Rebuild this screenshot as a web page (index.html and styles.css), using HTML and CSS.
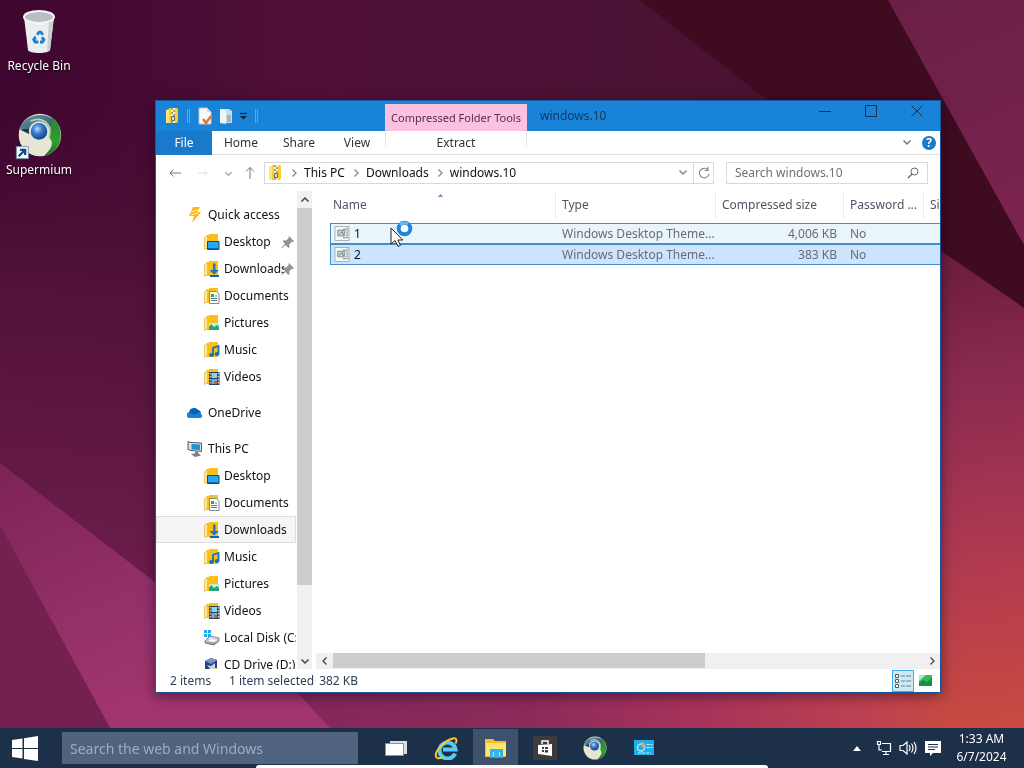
FILE: index.html
```html
<!DOCTYPE html>
<html lang="en">
<head>
<meta charset="utf-8">
<title>windows.10</title>
<link rel="stylesheet" href="styles.css">
</head>
<body>
<svg class="defs" aria-hidden="true">
  <defs>
    <linearGradient id="disk" x1="0" y1="0" x2="0" y2="1"><stop offset="0" stop-color="#f2f2f2"/><stop offset="1" stop-color="#8a8f96"/></linearGradient>
    <radialGradient id="ball" cx=".4" cy=".35" r=".7"><stop offset="0" stop-color="#b9dcff"/><stop offset=".4" stop-color="#3d7ed0"/><stop offset="1" stop-color="#123a80"/></radialGradient>
    <linearGradient id="leaf" x1="0" y1="0" x2="0" y2="1"><stop offset="0" stop-color="#2f7d3a"/><stop offset=".6" stop-color="#2ba32f"/><stop offset="1" stop-color="#1c6b22"/></linearGradient>
    <linearGradient id="cap" x1="0" y1="0" x2="1" y2="1"><stop offset="0" stop-color="#6c9aab"/><stop offset="1" stop-color="#245266"/></linearGradient>
  </defs>
  <symbol id="folder" viewBox="0 0 16 16"><path d="M2 2l1-1h2V0h9v15H2z" fill="#fcbf18"/><path d="M.5 3.500L3.500 2v12l-3 1.500z" fill="#ffe795" stroke="#e8b83a" stroke-width=".7"/></symbol>
  <symbol id="i-desktop" viewBox="0 0 16 16"><use href="#folder"/><path d="M3.500 7.500h11.500v8H3.500z" fill="#27a9f2" stroke="#174a70"/><path d="M4 14h10.500v1H4z" fill="#1464b0"/></symbol>
  <symbol id="i-downloads" viewBox="0 0 16 16"><use href="#folder"/><path d="M9 2.500h2.500v6.500H15l-4.800 4.500L5.500 9H9z" fill="#1979ca"/><path d="M6 14h9v2H6z" fill="#1566ae"/></symbol>
  <symbol id="i-documents" viewBox="0 0 16 16"><use href="#folder"/><path d="M5.500 3.500h7l2.500 2.500v9.500H5.500z" fill="#fff" stroke="#7c8a92"/><path d="M7 6h3v3H7z" fill="#3ca14b"/><path d="M7 10.500h6M7 12.500h6M11 8h2" stroke="#54747f"/></symbol>
  <symbol id="i-pictures" viewBox="0 0 16 16"><use href="#folder"/><path d="M5 8h10v7H5z" fill="#bdf0df"/><path d="M5 15v-3l2-3 3 3 3-2 2 2v3z" fill="#25a675"/></symbol>
  <symbol id="i-music" viewBox="0 0 16 16"><use href="#folder"/><path d="M9 13V6l5.500-2v8" fill="none" stroke="#1674b9" stroke-width="1.800"/><ellipse cx="7.500" cy="13" rx="2.500" ry="2" fill="#1674b9"/><ellipse cx="13" cy="12" rx="2.400" ry="2" fill="#1674b9"/></symbol>
  <symbol id="i-videos" viewBox="0 0 16 16"><use href="#folder"/><path d="M5 3h10.500v13H5z" fill="#29435b"/><path d="M7.500 4h5.500v5H7.500z" fill="#8ad5ef"/><path d="M7.500 10h5.500v5H7.500z" fill="#69b4e3"/><path d="M10 12h3v3h-3z" fill="#d45b41"/><path d="M6.200 4v12M14.300 4v12" stroke="#fff" stroke-dasharray="1.500 1.500"/></symbol>
  <symbol id="i-quick" viewBox="0 0 16 16"><path d="M6 0h7l-3 5h4L5 16l2-7H2z" fill="#ffb515"/><path d="M4 5l6-2M4 8l7-2" stroke="#fff" stroke-width=".8"/></symbol>
  <symbol id="i-cloud" viewBox="0 0 16 16"><path d="M3 13a3 3 0 0 1-.5-6A5 5 0 0 1 11 5a4 4 0 0 1 3 4 2.200 2.200 0 0 1-.5 4z" fill="#1384dc"/><path d="M2 7.500A5 5 0 0 1 11 5a4 4 0 0 1 2.500 2L7 10z" fill="#0862b5"/></symbol>
  <symbol id="i-pc" viewBox="0 0 16 16"><path d="M1 .5l3 1 10.500.5v8.500L4 9.500l-3-1z" fill="#d9e1e6" stroke="#4d5b66"/><path d="M4.500 3l8.500.5v5.500l-8.500-.6z" fill="#1b93d4"/><path d="M8 10.500l3 .5v2H8zM4 13l7-1 3 2.500L8 16z" fill="#76818a"/></symbol>
  <symbol id="i-disk" viewBox="0 0 16 16"><path d="M1 11l5-5 9 2v3l-5 4-9-2z" fill="url(#disk)" stroke="#62696f" stroke-width=".8"/><path d="M4 11l3-2 6 1-3 2z" fill="#fff"/><path d="M0 0h3v3H0zM4 0h3v3H4zM0 4h3v3H0zM4 4h3v3H4z" fill="#19aee9"/></symbol>
  <symbol id="i-cd" viewBox="0 0 16 16"><path d="M1 4l6-3 6 2v9l-6 3-6-3z" fill="#273f88"/><path d="M1 4l6 3 6-4-6-2z" fill="#8192c8"/><path d="M3 8l4 1 4-3v5l-4 2z" fill="#c9d2ec"/><path d="M9 11h5v4H9z" fill="#f0d879"/></symbol>
  <symbol id="i-zip" viewBox="0 0 16 16"><path d="M2 2l3-1V0h8l1 1v13l-2 1H2z" fill="#f8cf32"/><path d="M2 2h3v13H2z" fill="#ffe676"/><path d="M7 0h4v15H7z" fill="#fff5be"/><path d="M7 1h2M9 3h2M7 5h2M9 7h2M7 14h2" stroke="#555"/><path d="M7.500 8.500h3v4h-3z" fill="#ddd" stroke="#666"/></symbol>
  <symbol id="i-theme" viewBox="0 0 16 16"><path d="M.5.500h15v15H.5z" fill="#f7f8f8" stroke="#a3aeb1"/><path d="M3.500 4.500h7v6h-7z" fill="#c9d5d8" stroke="#7f8a8d"/><path d="M5 9l3-3 2 4M9 3.500h3M9 12.500h3" fill="none" stroke="#598d79"/><path d="M12.500 2v12M14 2v12" stroke="#64707a" stroke-dasharray="1 1"/></symbol>
  <symbol id="i-pin" viewBox="0 0 16 16"><path d="M9 1l6 6-1.500 1-1-.3-3 3 .2 3-1.200 1.200-3.500-3.500L1 15l-.5-.5L4.500 10 2 7l1-1 3 .2 3-3-.5-1z" fill="#8c959c"/></symbol>
  <symbol id="i-globe" viewBox="0 0 48 48"><circle cx="24" cy="24" r="23" fill="#e7e6d2"/><path d="M2 17C6 4 25-3 39 7l-5 12H15z" fill="url(#cap)"/><path d="M2 18l14-1-3 6z" fill="#173848"/><path d="M37 5c14 9 14 36-9 42 10-9 11-15 6-20z" fill="url(#leaf)"/><path d="M14 9c10-5 24 0 20 18" fill="none" stroke="#b9ceb8" stroke-width="2"/><circle cx="23" cy="20" r="11" fill="#dce7e5"/><circle cx="23" cy="20" r="9" fill="url(#ball)"/></symbol>
  <symbol id="c-down" viewBox="0 0 10 10"><path d="M1.500 3.500L5 7l3.500-3.500" fill="none" stroke="currentColor" stroke-width="1.500"/></symbol>
  <symbol id="c-right" viewBox="0 0 10 10"><path d="M3.500 1.500L7 5 3.500 8.500" fill="none" stroke="currentColor" stroke-width="1.300"/></symbol>
</svg>

<svg class="wallpaper" viewBox="0 0 1024 768" preserveAspectRatio="none" aria-hidden="true">
  <defs>
    <linearGradient id="sky" x1="0" y1="0" x2="1" y2="0"><stop offset="0" stop-color="#3e0630"/><stop offset=".3" stop-color="#500f38"/><stop offset=".6" stop-color="#4a1234"/><stop offset="1" stop-color="#4a1030"/></linearGradient>
    <linearGradient id="right" gradientUnits="userSpaceOnUse" x1="940" y1="250" x2="1010" y2="768"><stop offset="0" stop-color="#6a1c3c"/><stop offset=".25" stop-color="#8a2a50"/><stop offset=".6" stop-color="#b03a50"/><stop offset="1" stop-color="#d04e3c"/></linearGradient>
    <linearGradient id="low" gradientUnits="userSpaceOnUse" x1="300" y1="710" x2="945" y2="710"><stop offset="0" stop-color="#84275a"/><stop offset=".35" stop-color="#8c2b5b"/><stop offset=".62" stop-color="#a7335a"/><stop offset=".9" stop-color="#be424f"/><stop offset="1" stop-color="#c74942"/></linearGradient>
    <linearGradient id="left" gradientUnits="userSpaceOnUse" x1="90" y1="100" x2="50" y2="580"><stop offset="0" stop-color="#480b35" stop-opacity="0"/><stop offset=".4" stop-color="#521239"/><stop offset="1" stop-color="#6c1d4c"/></linearGradient>
    <linearGradient id="fold" gradientUnits="userSpaceOnUse" x1="0" y1="463" x2="120" y2="728"><stop offset="0" stop-color="#7c2355"/><stop offset=".6" stop-color="#94306a"/><stop offset="1" stop-color="#a2356f"/></linearGradient>
    <linearGradient id="pink" gradientUnits="userSpaceOnUse" x1="890" y1="0" x2="1000" y2="245"><stop offset="0" stop-color="#6a2046"/><stop offset="1" stop-color="#7c2450"/></linearGradient>
  </defs>
  <path d="M0 0h1024v768H0z" fill="url(#sky)"/>
  <path d="M0 100h160v500H0z" fill="url(#left)"/>
  <path d="M640 0h384v330L780 110z" fill="#3e0b20"/>
  <path d="M888 0h136v245z" fill="url(#pink)"/>
  <path d="M900 225l40 25 84 58v460H900z" fill="url(#right)"/>
  <path d="M280 660h660v108H280z" fill="url(#low)"/>
  <path d="M0 463l160 123 130 99 40 43v40H0z" fill="url(#fold)"/>
  <path d="M0 525l110 203v40H0z" fill="#74214f"/>
</svg>

<main class="desktop">
  <div class="shortcuts">
    <button class="shortcut">
      <svg width="48" height="48" viewBox="0 0 48 48" aria-hidden="true"><path d="M9 9l4 33c1 4 21 4 22 0l4-33z" fill="#eceeef"/><path d="M34 10l5-1-4 33-3 2z" fill="#c9ced1"/><ellipse cx="24" cy="9" rx="15" ry="6" fill="#b9bec2" stroke="#f4f5f5" stroke-width="2"/><g fill="#1681d4" transform="translate(5 6) scale(.8)"><path d="M20 25l3-4h4l3 4-3 2-2-3-2 3z"/><path d="M29 28l3 4-3 5h-4v-4h3l-2-3z"/><path d="M19 27l2 5h-2l1 1h3v4h-5l-3-5 2-3z"/></g></svg>
      <span>Recycle Bin</span>
    </button>
    <button class="shortcut">
      <svg width="48" height="48" viewBox="0 0 52 52" aria-hidden="true"><use href="#i-globe" x="3" y="1" width="48" height="48"/><path d="M1.500 37.500h13v13h-13z" fill="#f5faff" stroke="#7692a8"/><path d="M4 48l6-6M5.500 41H11v5.500" fill="none" stroke="#174882" stroke-width="2.500"/></svg>
      <span>Supermium</span>
    </button>
  </div>

  <section class="window" aria-label="windows.10">
    <header class="titlebar">
      <div class="quickbar">
        <svg width="16" height="16" aria-hidden="true"><use href="#i-zip"/></svg>
        <i class="bar"></i>
        <button aria-label="Properties"><svg width="16" height="18" viewBox="0 0 16 18"><path d="M2 1h8l4 4v12H2z" fill="#f6f8fa" stroke="#b4c8d6"/><path d="M10 1v4h4" fill="#ccd9e2"/><path d="M6 12l3 4 5-7" fill="none" stroke="#e87534" stroke-width="2.500"/></svg></button>
        <button aria-label="New folder"><svg width="16" height="18" viewBox="0 0 16 18"><path d="M2 2h9l3 2v12H2z" fill="#c9dbe6"/><path d="M2 2l6 1v14l-6-1z" fill="#eef4f7"/><path d="M9 8h4v7H9z" fill="#9cb6c8"/></svg></button>
        <button aria-label="Customize"><svg width="9" height="9" viewBox="0 0 9 9"><path d="M1 1.500h7" stroke="#123" stroke-width="1.200"/><path d="M1 4h7L4.500 7.500z" fill="#123"/></svg></button>
        <i class="bar"></i>
      </div>
      <span class="context">Compressed Folder Tools</span>
      <h1>windows.10</h1>
      <div class="controls">
        <button aria-label="Minimize"><svg width="14" height="14" viewBox="0 0 14 14"><path d="M1 7.500h12"/></svg></button>
        <button aria-label="Maximize"><svg width="14" height="14" viewBox="0 0 14 14"><path d="M1.500 1.500h11v11h-11z"/></svg></button>
        <button aria-label="Close"><svg width="14" height="14" viewBox="0 0 14 14"><path d="M1.500 1.500l11 11M12.500 1.500l-11 11"/></svg></button>
      </div>
    </header>

    <nav class="tabs">
      <button class="file">File</button><button>Home</button><button>Share</button><button>View</button>
      <button class="extract">Extract</button>
      <span class="spacer"></span>
      <button class="icon" aria-label="Expand ribbon"><svg width="10" height="10"><use href="#c-down"/></svg></button>
      <button class="help" aria-label="Help">?</button>
    </nav>

    <div class="address-row">
      <div class="arrows">
        <button aria-label="Back"><svg width="12" height="12" viewBox="0 0 12 12"><path d="M12 6H1M4.500 2.500L1 6l3.500 3.500"/></svg></button>
        <button class="faint" aria-label="Forward"><svg width="10" height="10" viewBox="0 0 12 12"><path d="M0 6h11M8 3l3 3-3 3"/></svg></button>
        <button class="soft" aria-label="Recent"><svg width="9" height="9"><use href="#c-down"/></svg></button>
        <button class="wide" aria-label="Up"><svg width="12" height="14" viewBox="0 0 12 14"><path d="M6 13V1.500M2 5.500l4-4 4 4"/></svg></button>
      </div>
      <div class="address">
        <svg width="16" height="16" aria-hidden="true"><use href="#i-zip"/></svg>
        <svg class="sep" width="10" height="10"><use href="#c-right"/></svg><a href="#">This PC</a>
        <svg class="sep" width="10" height="10"><use href="#c-right"/></svg><a href="#">Downloads</a>
        <svg class="sep" width="10" height="10"><use href="#c-right"/></svg><a href="#">windows.10</a>
        <span class="spacer"></span>
        <button class="icon" aria-label="History"><svg width="10" height="10"><use href="#c-down"/></svg></button>
        <button class="refresh" aria-label="Refresh"><svg width="12" height="12" viewBox="0 0 12 12"><path d="M9.500 2.500A4.800 4.800 0 1 0 11 7M6.500 3.500H10V0" fill="none" stroke="#888" stroke-width="1.200"/></svg></button>
      </div>
      <label class="search"><input type="text" placeholder="Search windows.10" aria-label="Search windows.10"><svg width="14" height="14" viewBox="0 0 14 14" aria-hidden="true"><circle cx="8.500" cy="5.500" r="3.500" fill="none" stroke="#666"/><path d="M6 8L2 12" stroke="#666" stroke-width="1.300"/></svg></label>
    </div>

    <div class="content">
      <nav class="tree">
        <ul>
          <li class="root"><a href="#"><svg><use href="#i-quick"/></svg>Quick access</a></li>
          <li><a href="#"><svg><use href="#i-desktop"/></svg><span>Desktop</span><svg class="pin"><use href="#i-pin"/></svg></a></li>
          <li><a href="#"><svg><use href="#i-downloads"/></svg><span>Downloads</span><svg class="pin"><use href="#i-pin"/></svg></a></li>
          <li><a href="#"><svg><use href="#i-documents"/></svg>Documents</a></li>
          <li><a href="#"><svg><use href="#i-pictures"/></svg>Pictures</a></li>
          <li><a href="#"><svg><use href="#i-music"/></svg>Music</a></li>
          <li><a href="#"><svg><use href="#i-videos"/></svg>Videos</a></li>
        </ul>
        <ul>
          <li class="root"><a href="#"><svg><use href="#i-cloud"/></svg>OneDrive</a></li>
        </ul>
        <ul>
          <li class="root"><a href="#"><svg><use href="#i-pc"/></svg>This PC</a></li>
          <li><a href="#"><svg><use href="#i-desktop"/></svg>Desktop</a></li>
          <li><a href="#"><svg><use href="#i-documents"/></svg>Documents</a></li>
          <li class="current"><a href="#"><svg><use href="#i-downloads"/></svg>Downloads</a></li>
          <li><a href="#"><svg><use href="#i-music"/></svg>Music</a></li>
          <li><a href="#"><svg><use href="#i-pictures"/></svg>Pictures</a></li>
          <li><a href="#"><svg><use href="#i-videos"/></svg>Videos</a></li>
          <li><a href="#"><svg><use href="#i-disk"/></svg>Local Disk (C:)</a></li>
          <li><a href="#"><svg><use href="#i-cd"/></svg>CD Drive (D:)</a></li>
        </ul>
      </nav>
      <div class="vscroll">
        <button aria-label="Scroll up"><svg class="flip" width="10" height="10"><use href="#c-down"/></svg></button>
        <div class="track"><div class="thumb"></div></div>
        <button aria-label="Scroll down"><svg width="10" height="10"><use href="#c-down"/></svg></button>
      </div>
      <div class="pane">
        <div class="files">
          <table>
            <colgroup><col class="w-name"><col class="w-type"><col class="w-size"><col class="w-pass"><col class="w-last"></colgroup>
            <thead><tr><th class="sorted">Name</th><th>Type</th><th>Compressed size</th><th>Password ...</th><th>Size</th></tr></thead>
            <tbody>
              <tr class="hover"><td class="name"><svg><use href="#i-theme"/></svg>1</td><td>Windows Desktop Theme...</td><td class="num">4,006 KB</td><td>No</td><td></td></tr>
              <tr class="selected"><td class="name"><svg><use href="#i-theme"/></svg>2</td><td>Windows Desktop Theme...</td><td class="num">383 KB</td><td>No</td><td></td></tr>
            </tbody>
          </table>
        </div>
        <div class="hscroll">
          <button aria-label="Scroll left"><svg class="flip" width="10" height="10"><use href="#c-right"/></svg></button>
          <div class="track"><div class="thumb"></div></div>
          <button aria-label="Scroll right"><svg width="10" height="10"><use href="#c-right"/></svg></button>
        </div>
      </div>
    </div>

    <footer class="status">
      <span class="count">2 items</span><span>1 item selected</span><span>382 KB</span>
      <span class="spacer"></span>
      <button class="active" aria-label="Details view"><svg width="16" height="14" viewBox="0 0 16 14"><path d="M.5.500h3v3h-3zM.5 5.500h3v3h-3zM.5 10.500h3v3h-3z" fill="#fff" stroke="#555"/><path d="M6 2h4M11 2h5M6 7h4M11 7h5M6 12h4M11 12h5" stroke="#6c7d88"/></svg></button>
      <button aria-label="Large icons view"><svg width="13" height="11" viewBox="0 0 13 11"><path d="M0 0h13v11H0z" fill="#36b955"/><path d="M0 0h7L0 6z" fill="#a8e8cb"/><path d="M0 8l4-3 4 2 5-4v8H0z" fill="#0f9146"/></svg></button>
    </footer>
  </section>

  <svg class="cursor" width="24" height="30" viewBox="0 0 24 30" aria-hidden="true"><circle cx="14.500" cy="8.500" r="5.800" fill="#fff" stroke="#1d86d9" stroke-width="4"/><path d="M10 5a6 6 0 0 1 8-1" fill="none" stroke="#69b9f0" stroke-width="3"/><path d="M1 8v16l4-3.500 3 6 2.500-1.200-2.700-5.300h5z" fill="#fff" stroke="#222"/></svg>
</main>

<footer class="taskbar">
  <button class="start" aria-label="Start"><svg width="26" height="25" viewBox="0 0 26 25"><path d="M0 4l10.500-1.500V12H0zM12 2.200L26 0v12H12zM0 13h10.500v9.500L0 21zM12 13h14v12l-14-2z" fill="#fff"/></svg></button>
  <input class="web" type="text" placeholder="Search the web and Windows" aria-label="Search the web and Windows">
  <div class="apps">
    <button aria-label="Task view"><svg width="24" height="24" viewBox="0 0 24 24"><path d="M6 5h17v13H6z" fill="#d9dde2"/><path d="M1.500 7.500h18v12h-18z" fill="#fff" stroke="#8793a3"/></svg></button>
    <button aria-label="Internet Explorer"><svg width="24" height="24" viewBox="0 0 24 24"><path d="M21 17.500A8 8 0 1 1 21.500 13.500H9" fill="none" stroke="#59c9f5" stroke-width="4"/><path d="M3 22C-2 17 11 4 19 2.500c4-.8 4 2 2.500 5" fill="none" stroke="#f7c52b" stroke-width="2"/><path d="M3 22c2 1 4 0 6-1" fill="none" stroke="#f7c52b" stroke-width="2"/></svg></button>
    <button class="on" aria-label="File Explorer"><svg width="24" height="24" viewBox="0 0 24 24"><path d="M1 3h8l2 2h11v16H1z" fill="#f5bd32"/><path d="M2 7h20v13H2z" fill="#ffe36e"/><path d="M6 22v-9h13v9h-3v-6h-1v6h-5v-6H9v6z" fill="#35b4e7"/></svg></button>
    <button aria-label="Store"><svg width="24" height="24" viewBox="0 0 24 24"><path d="M0 0h24v24H0z" fill="#3d3b3c"/><path d="M9 8V5h6v3" fill="none" stroke="#fff" stroke-width="1.500"/><path d="M5 9l14-1v12L5 18z" fill="#fff"/><path d="M9 11h2v2H9zM12 11h3v2h-3zM9 14h2v2H9zM12 14h3v2.500h-3z" fill="#3d3b3c"/></svg></button>
    <button aria-label="Supermium"><svg width="24" height="24"><use href="#i-globe"/></svg></button>
    <button aria-label="Control Panel"><svg width="24" height="24" viewBox="0 0 24 24"><path d="M1 4h20v15H1z" fill="#20aee8"/><circle cx="8" cy="11.500" r="3.500" fill="none" stroke="#a8e6ff" stroke-width="1.500"/><path d="M8 10.500V6a5 5 0 0 1 4.500 4.500z" fill="#f0ac42"/><path d="M13.500 8.500h6M13.500 11.500h6M5 17h13" stroke="#c5efff" stroke-dasharray="3 1"/></svg></button>
  </div>
  <span class="spacer"></span>
  <div class="tray">
    <button aria-label="Hidden icons"><svg width="8" height="5" viewBox="0 0 8 5"><path d="M0 5l4-5 4 5z" fill="#fff"/></svg></button>
    <button aria-label="Network"><svg width="16" height="16" viewBox="0 0 16 16"><path d="M1.500 1.500h3v3h-3zM3 5v5h3M6 3.500h8.500v8H6M10 12v2M7 14.500h6" fill="none" stroke="#fff" stroke-width="1.200"/></svg></button>
    <button aria-label="Volume"><svg width="18" height="16" viewBox="0 0 18 16"><path d="M1 5.500h3L8 2v12l-4-3.500H1zM10 5q2 3 0 6M12.500 3.500q3 4.500 0 9M15 2q4 6 0 12" fill="none" stroke="#fff" stroke-width="1.200"/></svg></button>
    <button aria-label="Notifications"><svg width="18" height="17" viewBox="0 0 18 17"><path d="M1 1h16v12H9l-3 3v-3H1z" fill="#fff"/><path d="M4 4.500h10M4 7h10M4 9.500h7" stroke="#1c304a"/></svg></button>
  </div>
  <button class="clock"><span>1:33 AM</span><span>6/7/2024</span></button>
  <div class="sheet"></div>
</footer>
</body>
</html>
```
FILE: styles.css
```css
* { box-sizing: border-box; }
body {
  margin: 0;
  height: 100vh;
  display: flex;
  flex-direction: column;
  overflow: hidden;
  font: 12px/16px "Noto Sans", "Open Sans", sans-serif;
  color: #111;
  background: #520f3a;
}
button { margin: 0; padding: 0; border: 0; background: none; color: inherit; font: inherit; }
a { color: inherit; text-decoration: none; }
svg { flex: none; }
.defs { position: absolute; width: 0; height: 0; }
.spacer { flex: 1; }
.wallpaper { position: fixed; inset: 0; width: 100%; height: 100%; z-index: -1; }

.desktop { position: relative; flex: 1; min-height: 0; }
.shortcuts { display: flex; flex-direction: column; gap: 32px; width: 78px; padding-top: 8px; }
.shortcut { display: flex; flex-direction: column; align-items: center; gap: 2px; height: 72px; color: #fff; text-shadow: 0 1px 2px #000; white-space: nowrap; }

.window {
  position: absolute;
  inset: 100px 83px 35px 155px;
  display: flex;
  flex-direction: column;
  background: #fff;
  border: 1px solid #1a55a0;
  box-shadow: 0 3px 12px rgba(20, 0, 20, .5);
}
.titlebar { display: flex; height: 30px; background: #1883d7; }
.quickbar { display: flex; align-items: center; gap: 5px; width: 229px; padding-left: 8px; }
.quickbar button { display: flex; }
.bar { width: 3px; height: 14px; margin: 0 2px; border: solid #5aa5e0; border-width: 0 1px; }
.context { width: 142px; margin-top: 3px; padding-top: 6px; background: #fcc0e0; color: #54304b; text-align: center; white-space: nowrap; font-size: 11px; }
.titlebar h1 { flex: 1; margin: 0; padding: 7px 13px; font-size: 12px; font-weight: 400; color: #123a62; }
.controls { display: flex; padding-top: 1px; }
.controls button { width: 46px; height: 22px; }
.controls svg { fill: none; stroke: #12304d; }

.tabs { display: flex; align-items: center; height: 24px; border-bottom: 1px solid #dfe1e3; color: #333; }
.tabs > button { width: 58px; height: 23px; }
.tabs > .file { width: 56px; height: 24px; background: #1979ca; color: #fff; }
.tabs > .extract { width: 142px; margin-left: -1px; background: linear-gradient(#e6e6e9, #e6e6e9) 0 0 / 1px 15px no-repeat, linear-gradient(#e6e6e9, #e6e6e9) 100% 0 / 1px 15px no-repeat; }
.tabs > .icon { width: 20px; color: #777; }
.tabs > .help { width: 14px; height: 14px; margin: 0 4px 0 5px; border-radius: 50%; background: #1979ca; color: #fff; font-weight: 700; line-height: 14px; }

.address-row { display: flex; align-items: center; height: 36px; padding: 0 12px 0 8px; }
.arrows { display: flex; width: 100px; gap: 1px; }
.arrows button { width: 22px; height: 20px; display: grid; place-items: center; color: #777; }
.arrows svg { fill: none; stroke: currentColor; }
.arrows .faint { color: #dcdcdc; width: 32px; }
.arrows .soft { color: #aaa; width: 16px; }
.arrows .wide { width: 26px; }
.address { flex: 1; display: flex; align-items: center; gap: 6px; height: 22px; margin-right: 12px; padding-left: 2px; border: 1px solid #d9d9d9; white-space: nowrap; }
.address .sep { color: #888; margin-right: -1px; }
.address .icon { width: 12px; color: #888; }
.address .refresh { width: 20px; height: 20px; border-left: 1px solid #d9d9d9; margin-left: -2px; display: grid; place-items: center; }
.search { display: flex; align-items: center; width: 202px; height: 22px; padding: 0 7px; border: 1px solid #d9d9d9; }
.search input { flex: 1; min-width: 0; padding: 0 1px; border: 0; outline: 0; font: inherit; background: none; }
.search input::placeholder { color: #707070; opacity: 1; }

.content { flex: 1; min-height: 0; display: flex; }
.tree { width: 141px; padding-top: 10px; overflow: hidden; }
.tree ul { margin: 0 0 9px; padding: 0; list-style: none; }
.tree a { display: flex; align-items: center; gap: 4px; height: 27px; padding-left: 48px; white-space: nowrap; }
.tree li { margin-right: 1px; overflow: hidden; }
.tree svg { width: 16px; height: 16px; }
.tree .root a { padding-left: 31px; gap: 5px; }
.tree span { width: 60px; overflow: hidden; }
.tree .pin { margin-left: -7px; width: 14px; height: 14px; }
.tree .current { background: #f5f5f5; outline: 1px solid #dedede; outline-offset: -1px; }
.vscroll { display: flex; flex-direction: column; width: 15px; background: #f0f0f0; color: #444; }
.vscroll button, .hscroll button { display: grid; place-items: center; width: 17px; height: 17px; flex: none; }
.vscroll button { width: 15px; }
.flip { transform: rotate(180deg); }
.track { flex: 1; min-height: 0; }
.thumb { background: #cdcdcd; }
.vscroll .thumb { height: 85%; }
.pane { flex: 1; min-width: 0; display: flex; flex-direction: column; padding-left: 4px; }
.files { flex: 1; min-height: 0; overflow: hidden; padding-left: 14px; }
table { width: 660px; table-layout: fixed; border-collapse: separate; border-spacing: 0; color: #6b6b72; white-space: nowrap; }
.w-name { width: 226px; }
.w-type { width: 160px; }
.w-size { width: 128px; }
.w-pass { width: 80px; }
.w-last { width: 66px; }
th { height: 28px; padding: 0 0 0 6px; border-right: 1px solid #ececec; text-align: left; font-weight: 400; color: #4d5664; }
th:first-child { padding-left: 3px; }
.sorted { background: conic-gradient(from 135deg at 50% 0, #7f9bb5 90deg, transparent 0) 107px 3px / 7px 3px no-repeat; }
thead::after { content: ""; display: block; height: 4px; }
td { height: 21px; padding: 0 7px 0 6px; overflow: hidden; }
.num { text-align: right; }
.name { display: flex; align-items: center; gap: 4px; padding: 0 4px; color: #111; }
.name svg { width: 16px; height: 15px; }
tbody tr { outline: 1px solid #448bc3; outline-offset: -1px; }
.hover { background: #e9f4fb; }
.selected { background: #cce4ff; }
.hscroll { display: flex; height: 16px; background: #f0f0f0; color: #444; }
.hscroll button { height: 15px; }
.hscroll .thumb { width: 63%; height: 15px; }

.status { display: flex; align-items: center; height: 23px; padding: 0 5px 0 14px; gap: 5px; color: #2c3d55; }
.status .count { width: 54px; }
.status button { display: grid; place-items: center; width: 20px; height: 22px; }
.status .active { width: 22px; margin-right: -4px; border: 1px solid #3daeea; background: #cbeaf8; }

.cursor { position: absolute; left: 390px; top: 220px; }

.taskbar { position: relative; display: flex; align-items: center; height: 40px; background: #1c304a; color: #fff; }
.start { display: grid; place-items: center; width: 50px; height: 40px; }
.web { width: 296px; height: 32px; margin-left: 12px; padding: 0 8px; border: 0; background: #50647f; color: #fff; font: 14px/20px "Noto Sans", "Open Sans", sans-serif; }
.web::placeholder { color: #9aadc3; opacity: 1; }
.apps { display: flex; margin-left: 13px; }
.apps button { display: grid; place-items: center; width: 50px; height: 38px; }
.apps .on { width: 45px; margin: 0 2px; background: #3e526d; }
.tray { display: flex; align-items: center; gap: 7px; padding-right: 6px; }
.tray button { display: grid; place-items: center; }
.tray button:first-child { margin-right: 8px; }
.clock { display: flex; flex-direction: column; align-items: center; gap: 2px; width: 67px; margin-right: 9px; }
.sheet { position: absolute; left: 25%; right: 25%; bottom: 0; height: 3px; border-radius: 8px 8px 0 0; background: #fff; }
```
